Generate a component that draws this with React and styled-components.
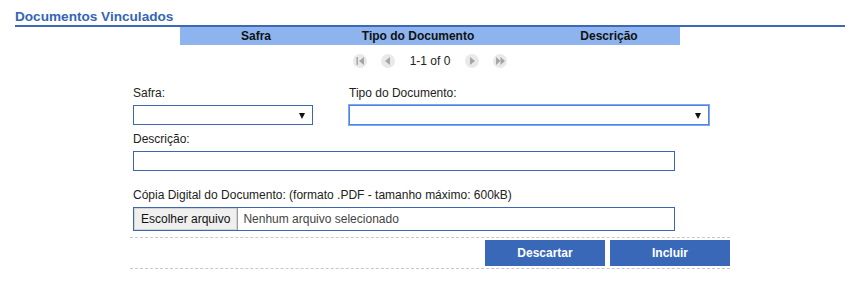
import React from "react"
import styled, { createGlobalStyle } from "styled-components"

const GlobalStyle = createGlobalStyle`
  body {
    margin: 0;
    background: #fff;
    font-family: "Liberation Sans", Arial, sans-serif;
    color: #222;
  }
`

const Page = styled.div`
  width: 861px;
  height: 282px;
  padding: 0 16px 0 15px;
  box-sizing: border-box;
`

const Title = styled.h2`
  margin: 0;
  padding-top: 8px;
  height: 17px;
  font-size: 13.6px;
  font-weight: bold;
  color: #3565b6;
  line-height: 17px;
  border-bottom: 2px solid #3d68b6;
`

const Grid = styled.div`
  margin-left: 165px;
  width: 500px;
`

const GridHeader = styled.div`
  display: grid;
  grid-template-columns: 152px 172px 176px;
  height: 18px;
  background: #8db4ee;
  font-size: 12px;
  font-weight: bold;
  color: #111;
  line-height: 18px;
`

const HeaderCell = styled.div`
  text-align: center;
  padding-left: ${({ $shift }) => $shift || 0}px;
`

const Pager = styled.div`
  display: flex;
  justify-content: center;
  align-items: center;
  gap: 14px;
  height: 16px;
  margin-top: 8px;
`

const PagerButton = styled.span`
  display: flex;
  align-items: center;
  justify-content: center;
  width: 14px;
  height: 14px;
  border-radius: 50%;
  background: #e9e9e9;
`

const PagerText = styled.span`
  font-size: 12px;
  color: #222;
  margin: 0 1px;
`

const Form = styled.div`
  margin-left: 118px;
  width: 597px;
  padding-top: 17px;
`

const Row = styled.div`
  display: flex;
  gap: 36px;
`

const Field = styled.div`
  display: flex;
  flex-direction: column;
  margin-bottom: ${({ $mb }) => $mb || 0}px;
`

const Label = styled.label`
  font-size: 12px;
  line-height: 14px;
  color: #222;
  margin-bottom: 5px;
`

const Select = styled.div`
  position: relative;
  box-sizing: border-box;
  width: ${({ $w }) => $w}px;
  height: 20px;
  border: 1px solid #3c66b3;
  background: #fff;
  ${({ $focus }) =>
    $focus &&
    `
    border: 1px solid #4a86e8;
    box-shadow: 0 0 0 1px #7fa8f0;
  `}
  &::after {
    content: "";
    position: absolute;
    right: 7px;
    top: 7px;
    border-left: 3.5px solid transparent;
    border-right: 3.5px solid transparent;
    border-top: 6px solid #111;
  }
`

const TextInput = styled.div`
  box-sizing: border-box;
  width: 542px;
  height: 20px;
  border: 1px solid #3c66b3;
`

const FileBox = styled.div`
  box-sizing: border-box;
  display: flex;
  align-items: center;
  width: 542px;
  height: 24px;
  border: 1px solid #3c66b3;
`

const FileButton = styled.span`
  box-sizing: border-box;
  height: 22px;
  padding: 0 7px;
  display: flex;
  align-items: center;
  background: #efefef;
  border-right: 1px solid #9a9a9a;
  box-shadow: inset 0 0 0 1px #d4d4d4;
  font-size: 12px;
  color: #111;
`

const FileText = styled.span`
  font-size: 12px;
  color: #444;
  margin-left: 5px;
`

const Actions = styled.div`
  display: flex;
  justify-content: flex-end;
  gap: 5px;
  margin-left: -3px;
  width: 600px;
  margin-top: 6px;
  padding: 2px 0 2px;
  border-top: 1px dashed #c8c8c8;
  border-bottom: 1px dashed #c8c8c8;
`

const Button = styled.button`
  width: 120px;
  height: 26px;
  border: none;
  background: #3a68b8;
  color: #fff;
  font-family: "Liberation Sans", Arial, sans-serif;
  font-size: 12px;
  font-weight: bold;
  cursor: pointer;
`

const Tri = ({ dir }) => (
  <svg width="6" height="8" viewBox="0 0 6 8">
    {dir === "left" ? (
      <polygon points="5,0 5,8 0,4" fill="#a5a5a5" />
    ) : (
      <polygon points="1,0 1,8 6,4" fill="#a5a5a5" />
    )}
  </svg>
)

const FirstIcon = () => (
  <svg width="8" height="8" viewBox="0 0 8 8">
    <rect x="0.5" y="0" width="1.5" height="8" fill="#a5a5a5" />
    <polygon points="8,0 8,8 3,4" fill="#a5a5a5" />
  </svg>
)

const LastIcon = () => (
  <svg width="9" height="8" viewBox="0 0 9 8">
    <polygon points="0,0 0,8 4.5,4" fill="#a5a5a5" />
    <polygon points="4.5,0 4.5,8 9,4" fill="#a5a5a5" />
  </svg>
)

const App = () => (
  <>
    <GlobalStyle />
    <Page>
      <Title>Documentos Vinculados</Title>
      <Grid>
        <GridHeader>
          <HeaderCell>Safra</HeaderCell>
          <HeaderCell>Tipo do Documento</HeaderCell>
          <HeaderCell $shift={34}>Descrição</HeaderCell>
        </GridHeader>
        <Pager>
          <PagerButton><FirstIcon /></PagerButton>
          <PagerButton><Tri dir="left" /></PagerButton>
          <PagerText>1-1 of 0</PagerText>
          <PagerButton><Tri dir="right" /></PagerButton>
          <PagerButton><LastIcon /></PagerButton>
        </Pager>
      </Grid>
      <Form>
        <Row>
          <Field $mb={7}>
            <Label>Safra:</Label>
            <Select $w={180} />
          </Field>
          <Field $mb={7}>
            <Label>Tipo do Documento:</Label>
            <Select $w={360} $focus />
          </Field>
        </Row>
        <Field $mb={17}>
          <Label>Descrição:</Label>
          <TextInput />
        </Field>
        <Field>
          <Label>Cópia Digital do Documento: (formato .PDF - tamanho máximo: 600kB)</Label>
          <FileBox>
            <FileButton>Escolher arquivo</FileButton>
            <FileText>Nenhum arquivo selecionado</FileText>
          </FileBox>
        </Field>
        <Actions>
          <Button>Descartar</Button>
          <Button>Incluir</Button>
        </Actions>
      </Form>
    </Page>
  </>
)

export default App
